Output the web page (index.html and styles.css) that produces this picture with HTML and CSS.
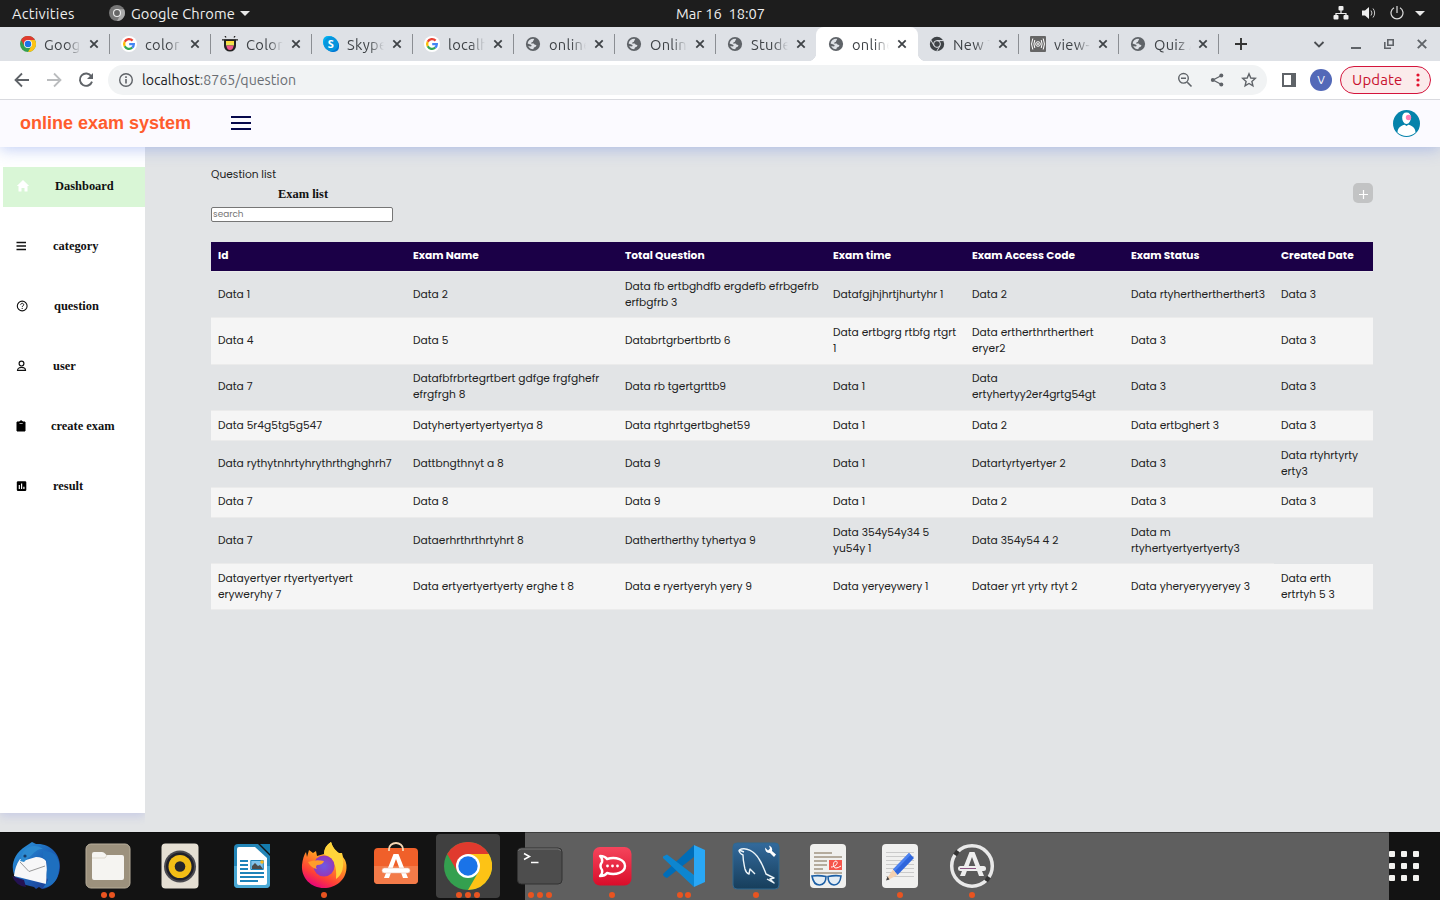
FILE: index.html
```html
<!DOCTYPE html>
<html lang="en">
<head>
<meta charset="utf-8">
<title>online exam system</title>
<link rel="stylesheet" href="styles.css">
</head>
<body>
<svg class="defs" width="0" height="0">
  <symbol id="globe" viewBox="0 0 16 16"><circle cx="8" cy="8" r="7.1" fill="#5f6368"/><path d="M2.600 7.500C3 4.500 5.500 2.600 8.600 2.700L9.200 4 8.200 4.600 8 5.800 6.400 6.600 6 7.600 8.600 7.600 9.800 8.800 11.400 9 11 10.600 9 11.400 8.200 13.300C6 13.300 4 12 3.200 10L5.400 10.400 6.800 10 6 8.800z" fill="#dee1e6"/></symbol>
  <symbol id="google" viewBox="0 0 16 16"><circle cx="8" cy="8" r="8" fill="#fff"/><g fill="none" stroke-width="2.3"><path d="M11.6 4.6A4.9 4.9 0 0 0 3.7 5.8" stroke="#ea4335"/><path d="M3.7 5.8A4.9 4.9 0 0 0 3.7 10.3" stroke="#fbbc05"/><path d="M3.7 10.3A4.9 4.9 0 0 0 11.2 11.7" stroke="#34a853"/><path d="M11.2 11.7A4.9 4.9 0 0 0 12.8 8.2H8.2" stroke="#4285f4"/></g></symbol>
  <symbol id="chrome" viewBox="0 0 48 48"><circle cx="24" cy="24" r="24" fill="#34a04f"/><path d="M24 24 3.2 12A24 24 0 0 1 44.8 12z" fill="#e03a2e"/><path d="M24 12H44.8A24 24 0 0 1 24 48L34.4 30z" fill="#fdc315"/><path d="M3.2 12 13.6 30 24 24V12z" fill="#e03a2e"/><circle cx="24" cy="24" r="12" fill="#fff"/><circle cx="24" cy="24" r="9.7" fill="#1a73e8"/></symbol>
  <symbol id="chromegray" viewBox="0 0 16 16"><circle cx="8" cy="8" r="7.2" fill="#3f4347"/><g stroke="#dee1e6" stroke-width="1" fill="none"><circle cx="8" cy="8" r="3.4"/><path d="M8 4.6h6.5M5 9.7 1.8 4M11 9.7 7.7 15.3"/></g></symbol>
  <symbol id="close" viewBox="0 0 10 10"><path d="M1.3 1.3 8.7 8.7M8.7 1.3 1.3 8.7" stroke="#3f4347" stroke-width="1.8"/></symbol>
</svg>

<div class="topbar">
  <span class="activities">Activities</span>
  <span class="app"><svg width="16" height="16" viewBox="0 0 16 16"><circle cx="8" cy="8" r="8" fill="#777"/><path d="M8 4.2H15A8 8 0 0 1 8 16L11.3 10z" fill="#aaa"/><circle cx="8" cy="8" r="4" fill="#eee"/><circle cx="8" cy="8" r="2.9" fill="#666"/></svg><b>Google Chrome</b><i class="caret"></i></span>
  <span class="clock">Mar 16&nbsp; 18:07</span>
  <span class="status">
    <svg width="16" height="14" viewBox="0 0 16 14"><path d="M8 3v5M3 10V7.5h10V10" stroke="#eee" stroke-width="1.2" fill="none"/><g fill="#eee"><rect x="5.5" y="0" width="5" height="4.5" rx="1"/><rect x=".5" y="9" width="5" height="4.5" rx="1"/><rect x="10.5" y="9" width="5" height="4.5" rx="1"/></g></svg>
    <svg width="16" height="14" viewBox="0 0 16 14"><path d="M1 4.5h3L8 1v12L4 9.500H1z" fill="#eee"/><path d="M10 4.500a4 4 0 0 1 0 5M12 2.500a7 7 0 0 1 0 9" fill="none" stroke="#ccc"/></svg>
    <svg width="14" height="14" viewBox="0 0 14 14"><path d="M4 1.700a6 6 0 1 0 6 0M7 0v7" fill="none" stroke="#ddd" stroke-width="1.200"/></svg>
    <i class="caret"></i>
  </span>
</div>

<div class="tabs">
  <div class="tab"><svg class="fav"><use href="#chrome"/></svg><span>Goog</span><svg class="x"><use href="#close"/></svg></div>
  <div class="tab"><svg class="fav"><use href="#google"/></svg><span>color</span><svg class="x"><use href="#close"/></svg></div>
  <div class="tab"><svg class="fav" viewBox="0 0 16 16"><path d="M2 3.500h12V10a6 5.500 0 0 1-12 0z" fill="#222"/><path d="M4 5h8v2H4z" fill="#ffd83b"/><path d="M4 7h8v2.500H4z" fill="#e8e455"/><path d="M4.300 9.500h7.400Q11 14 8 14T4.300 9.500" fill="#f0568c"/><path d="M0 3.800h16M3 0l1 1.500M13 0l-1 1.500" stroke="#222" stroke-width="1.300"/></svg><span>Color</span><svg class="x"><use href="#close"/></svg></div>
  <div class="tab"><svg class="fav" viewBox="0 0 16 16"><rect x="0" y="0" width="12" height="12" rx="5" fill="#00aff0"/><rect x="4" y="4" width="12" height="12" rx="5" fill="#0078d4"/><circle cx="8" cy="8" r="7.200" fill="#0795dd"/><text x="8" y="12" class="skype">S</text></svg><span>Skype</span><svg class="x"><use href="#close"/></svg></div>
  <div class="tab"><svg class="fav"><use href="#google"/></svg><span>localh</span><svg class="x"><use href="#close"/></svg></div>
  <div class="tab"><svg class="fav"><use href="#globe"/></svg><span>online</span><svg class="x"><use href="#close"/></svg></div>
  <div class="tab"><svg class="fav"><use href="#globe"/></svg><span>Onlin</span><svg class="x"><use href="#close"/></svg></div>
  <div class="tab last"><svg class="fav"><use href="#globe"/></svg><span>Stude</span><svg class="x"><use href="#close"/></svg></div>
  <div class="tab active"><svg class="fav"><use href="#globe"/></svg><span>online</span><svg class="x"><use href="#close"/></svg></div>
  <div class="tab"><svg class="fav"><use href="#chromegray"/></svg><span>New T</span><svg class="x"><use href="#close"/></svg></div>
  <div class="tab narrow"><svg class="fav" viewBox="0 0 16 16"><rect width="16" height="16" rx="1" fill="#666"/><g fill="none" stroke="#fff" stroke-width="1"><path d="M2.800 2.500q-2.500 5.500 0 11M4.800 4q-1.800 4 0 8M13.200 2.500q2.500 5.500 0 11M11.200 4q1.800 4 0 8"/><circle cx="8" cy="8" r="2.300"/></g><circle cx="8" cy="8" r=".9" fill="#fff"/></svg><span>view-</span><svg class="x"><use href="#close"/></svg></div>
  <div class="tab narrow"><svg class="fav"><use href="#globe"/></svg><span>Quiz A</span><svg class="x"><use href="#close"/></svg></div>
  <svg class="newtab" viewBox="0 0 12 12"><path d="M6 0v12M0 6h12" stroke="#333" stroke-width="1.900"/></svg>
  <div class="winbtns">
    <svg width="12" height="10" viewBox="0 0 12 10"><path d="M1.500 3 6 7.500 10.500 3" fill="none" stroke="#4a4d51" stroke-width="1.800"/></svg>
    <svg width="10" height="10" viewBox="0 0 10 10"><path d="M0 9h10" stroke="#5f6368" stroke-width="2"/></svg>
    <svg width="10" height="10" viewBox="0 0 10 10"><path d="M3.800.8h5.400v5.400H3.800zM.8 3v6.200H7" fill="none" stroke="#5f6368" stroke-width="1.600"/></svg>
    <svg width="10" height="10" viewBox="0 0 10 10"><path d="M.8.8 9.200 9.200M9.200.8.8 9.200" stroke="#5f6368" stroke-width="1.900"/></svg>
  </div>
</div>

<div class="toolbar">
  <svg class="nav" viewBox="0 0 16 16"><path d="M15 8H2M8 1.500 1.500 8 8 14.500" fill="none" stroke="#5f6368" stroke-width="1.800"/></svg>
  <svg class="nav" viewBox="0 0 16 16"><path d="M1 8h13M8 1.500 14.500 8 8 14.500" fill="none" stroke="#babcbe" stroke-width="1.800"/></svg>
  <svg class="nav" viewBox="0 0 16 16"><path d="M13.300 4.300A6.200 6.200 0 1 0 14 9.600" fill="none" stroke="#5f6368" stroke-width="1.900"/><path d="M15 1v6H9z" fill="#5f6368"/></svg>
  <div class="omnibox">
    <svg width="16" height="16" viewBox="0 0 16 16"><circle cx="8" cy="8" r="6.300" fill="none" stroke="#5f6368" stroke-width="1.400"/><path d="M8 7v4.500M8 4.300v1.600" stroke="#5f6368" stroke-width="1.600"/></svg>
    <span class="url">localhost<em>:8765/question</em></span>
    <div class="omni-icons">
      <svg width="16" height="16" viewBox="0 0 16 16"><path d="M10.300 10.300 14.500 14.500M4 6.300h5" stroke="#5f6368" stroke-width="1.600"/><circle cx="6.500" cy="6.300" r="4.800" fill="none" stroke="#5f6368" stroke-width="1.400"/></svg>
      <svg width="16" height="16" viewBox="0 0 16 16"><path d="M12.500 3.500 4 8l8.500 4.500" fill="none" stroke="#5f6368" stroke-width="1.300"/><g fill="#5f6368"><circle cx="12.300" cy="3.500" r="2"/><circle cx="3.800" cy="8" r="2"/><circle cx="12.300" cy="12.500" r="2"/></g></svg>
      <svg width="16" height="16" viewBox="0 0 16 16"><path d="M8 1.800 9.800 6l4.500.4-3.400 3 1 4.400L8 11.500l-3.900 2.300 1-4.400-3.400-3L6.200 6z" fill="none" stroke="#5f6368" stroke-width="1.400"/></svg>
    </div>
  </div>
  <svg class="panel" width="14" height="14" viewBox="0 0 14 14"><path d="M1 1h12v12H1z" fill="#fff" stroke="#5f6368" stroke-width="2"/><path d="M9 1h4v12H9z" fill="#5f6368"/></svg>
  <span class="profile">V</span>
  <span class="update"><b>Update</b><svg width="4" height="14" viewBox="0 0 4 14"><g fill="#e2102c"><circle cx="2" cy="2" r="1.600"/><circle cx="2" cy="7" r="1.600"/><circle cx="2" cy="12" r="1.600"/></g></svg></span>
</div>

<header class="header">
  <h1>online exam system</h1>
  <div class="burger"><i></i><i></i><i></i></div>
  <svg class="avatar" viewBox="0 0 27 27"><circle cx="13.500" cy="13.500" r="13.500" fill="#0583ab"/><path d="M4.500 22.500c0-5 4-7 7.200-7.800L13.500 16l1.800-1.300c3.200.8 7.200 2.800 7.200 7.800-5 4.500-13 4.500-18 0z" fill="#fff"/><path d="M13.500 2.500c3 0 4.300 2 4.300 5 0 3.500-1.800 6.500-4.300 6.500S9.200 11 9.200 7.500c0-3 1.300-5 4.300-5z" fill="#fff"/><circle cx="15.500" cy="7.500" r="2.700" fill="#ff80b5"/></svg>
</header>

<div class="page">
  <nav class="side">
    <a class="on"><svg viewBox="0 0 14 14"><path d="M7 1 .800 7H2.500v5.500h3V9h3v3.500h3V7h1.700z" fill="#fff"/></svg><span class="s4">Dashboard</span></a>
    <a><svg viewBox="0 0 14 14"><path d="M.500 3.500h9.500M.500 7h9.500M.500 10.500h9.500" stroke="#111" stroke-width="1.400"/></svg><span class="s2">category</span></a>
    <a><svg viewBox="0 0 14 14"><circle cx="6.200" cy="7" r="4.900" fill="none" stroke="#111" stroke-width="1.100"/><path d="M4.700 5.800c0-2 3-2 3 0 0 1.100-1.500 1-1.500 2.200M6.200 8.900v1.100" fill="none" stroke="#111"/></svg><span class="s3">question</span></a>
    <a><svg viewBox="0 0 14 14"><circle cx="5.500" cy="4.600" r="2.400" fill="none" stroke="#111" stroke-width="1.200"/><path d="M1.500 11.400c0-4 8-4 8 0z" fill="none" stroke="#111" stroke-width="1.200"/></svg><span class="s2">user</span></a>
    <a><svg viewBox="0 0 14 14"><path d="M1 3h2.500a1.700 1.700 0 0 1 3.200 0H9v9H1z" fill="#000" stroke="#000" stroke-linejoin="round"/><path d="M3.500 4.500h3.200" stroke="#aaa"/></svg><span class="s1">create exam</span></a>
    <a><svg viewBox="0 0 14 14"><rect x=".800" y="2.300" width="9.500" height="9.700" rx="1.200"/><path d="M3.300 6v4M5.600 4.500V10M7.900 7.800V10" stroke="#fff" stroke-width="1.200"/></svg><span class="s2">result</span></a>
  </nav>
  <main class="main">
    <div class="head">
      <div class="filter">
        <p>Question list</p>
        <h2>Exam list</h2>
        <input class="search" placeholder="search">
      </div>
      <button class="add"><svg width="9" height="9" viewBox="0 0 9 9"><path d="M4.500 0v9M0 4.500h9" stroke="#fff" stroke-width="1.200"/></svg></button>
    </div>
    <table class="grid">
      <colgroup><col class="c1"><col class="c2"><col class="c3"><col class="c4"><col class="c5"><col class="c6"><col class="c7"></colgroup>
      <thead><tr><th>Id</th><th>Exam Name</th><th>Total Question</th><th>Exam time</th><th>Exam Access Code</th><th>Exam Status</th><th>Created Date</th></tr></thead>
      <tbody>
        <tr class="first"><td>Data 1</td><td>Data 2</td><td>Data fb ertbghdfb ergdefb efrbgefrb<br>erfbgfrb 3</td><td>Datafgjhjhrtjhurtyhr 1</td><td>Data 2</td><td>Data rtyherthertherthert3</td><td>Data 3</td></tr>
        <tr class="h47"><td>Data 4</td><td>Data 5</td><td>Databrtgrbertbrtb 6</td><td>Data ertbgrg rtbfg rtgrt<br>1</td><td>Data ertherthrtherthert<br>eryer2</td><td>Data 3</td><td>Data 3</td></tr>
        <tr class="h46 raised"><td>Data 7</td><td>Datafbfrbrtegrtbert gdfge frgfghefr<br>efrgfrgh 8</td><td>Data rb tgertgrttb9</td><td>Data 1</td><td>Data<br>ertyhertyy2er4grtg54gt</td><td>Data 3</td><td>Data 3</td></tr>
        <tr class="h30"><td>Data 5r4g5tg5g547</td><td>Datyhertyertyertyertya 8</td><td>Data rtghrtgertbghet59</td><td>Data 1</td><td>Data 2</td><td>Data ertbghert 3</td><td>Data 3</td></tr>
        <tr class="h47"><td>Data rythytnhrtyhrythrthghghrh7</td><td>Dattbngthnyt a 8</td><td>Data 9</td><td>Data 1</td><td>Datartyrtyertyer 2</td><td>Data 3</td><td>Data rtyhrtyrty<br>erty3</td></tr>
        <tr class="h30 raised"><td>Data 7</td><td>Data 8</td><td>Data 9</td><td>Data 1</td><td>Data 2</td><td>Data 3</td><td>Data 3</td></tr>
        <tr class="h46"><td>Data 7</td><td>Dataerhrthrthrtyhrt 8</td><td>Dathertherthy tyhertya 9</td><td>Data 354y54y34 5<br>yu54y 1</td><td>Data 354y54 4 2</td><td>Data m<br>rtyhertyertyertyerty3</td></tr>
        <tr class="h46"><td>Datayertyer rtyertyertyert<br>eryweryhy 7</td><td>Data ertyertyertyerty erghe t 8</td><td>Data e ryertyeryh yery 9</td><td>Data yeryeywery 1</td><td>Dataer yrt yrty rtyt 2</td><td>Data yheryeryyeryey 3</td><td>Data erth<br>ertrtyh 5 3</td></tr>
      </tbody>
    </table>
  </main>
</div>

<footer class="dock">
  <div class="app-icon"><svg viewBox="0 0 48 48"><defs><linearGradient id="tb" x1="0" y1="0" x2="1" y2="1"><stop offset="0" stop-color="#2f9be0"/><stop offset=".5" stop-color="#1c63b8"/><stop offset="1" stop-color="#1f2f86"/></linearGradient></defs><path d="M14 4 20 0 24 2C38 1 48 12 48 24 48 36 40 46 30 47L27 45 24 47 22 45 10 42 6 40C-2 30-2 14 14 4z" fill="url(#tb)"/><path d="M8 17 14 18 24 15Q31 15 34 19L35 28 34 42 2 34Q3 24 8 17z" fill="#f7f7f8"/><path d="M8 20 17 29.500 33 24" fill="none" stroke="#999"/><path d="M9 17C9 6 22 0 31 7 24 6 21 13 16 16L12 20 8 19z" fill="#2d8ad0"/><path d="M31 16C39 18 32 32 36 38L31 46C44 44 48 34 47 20Q44 8 31 9z" fill="#1e6fbf"/><path d="M0 34 12 38 14 45Q4 44 0 34z" fill="#241252"/><circle cx="13" cy="14" r="1.600" fill="#173b68"/></svg></div>
  <div class="app-icon"><svg viewBox="0 0 48 48"><rect x="2" y="2" width="44" height="44" rx="5" fill="#9c917d" stroke="#b8ae9b"/><path d="M8 12q0-2 2-2h8q2 0 3 1.500L22.500 13H38q2 0 2 2v21q0 2-2 2H10q-2 0-2-2z" fill="#f5f4f1"/><path d="M8 16h13l2-3" stroke="#ddd8cd" fill="none"/></svg><span class="dots"><i></i><i></i></span></div>
  <div class="app-icon"><svg viewBox="0 0 48 48"><rect x="5.500" y="1.500" width="37" height="45" rx="4" fill="#e5dfd3"/><circle cx="24" cy="24.500" r="16" fill="#4a4a4f"/><circle cx="24" cy="24.500" r="14" fill="#20212b"/><circle cx="24" cy="24.500" r="11.500" fill="#f2bd16"/><circle cx="24" cy="24.500" r="5.300" fill="#25252c"/></svg></div>
  <div class="app-icon"><svg viewBox="0 0 48 48"><path d="M10 2h20l12 12v28q0 4-4 4H10q-4 0-4-4V6q0-4 4-4z" fill="#2385b7"/><path d="M6 24h36v18q0 4-4 4H10q-4 0-4-4z" fill="#49a8d4"/><path d="M9 7q0-2 2-2h16l12 11v25q0 2-2 2H11q-2 0-2-2z" fill="#fff"/><path d="M32 2h10v10z" fill="#147bad"/><path d="M12 19h8M12 23h8M12 27h8M12 31h24M12 35h24M12 39h18" stroke="#1d83ba" stroke-width="2"/><path d="M22.800 18.500h12.500v9H22.800z" fill="#82c4ec" stroke="#1d83ba"/><path d="M24 27v-3l3-3 3 3 2-1 3 4z" fill="#4b4b4b"/><circle cx="34" cy="20" r="1.800" fill="#f8b81d"/></svg></div>
  <div class="app-icon"><svg viewBox="0 0 48 48"><defs><linearGradient id="fx" x1=".8" y1="0" x2=".3" y2="1"><stop offset="0" stop-color="#fff04d"/><stop offset=".4" stop-color="#ff9a22"/><stop offset=".75" stop-color="#ff4036"/><stop offset="1" stop-color="#e5007f"/></linearGradient><radialGradient id="fxc"><stop offset="0" stop-color="#6d59e5"/><stop offset="1" stop-color="#9438b8"/></radialGradient></defs><path d="M7 15 9 8 13 11 16 9 17 14 24 12Q24 4 31 0 33 7 38 11L42 11 43 15Q47 20 46.500 26C46 38 36 46 24 46 11 46 1 36 2 23Q3 14 6 10z" fill="url(#fx)"/><path d="M24 12Q24 5 31 0 33 8 42 13 46 30 36 37 38 18 24 12z" fill="#ffd43b"/><circle cx="24" cy="24" r="10.500" fill="url(#fxc)"/><path d="M8 20q8-3 16-1-1 4-7 4-2 2 0 4-6-1-9-7z" fill="#ff9e2b"/></svg><span class="dots"><i></i></span></div>
  <div class="app-icon"><svg viewBox="0 0 48 48"><rect x="2" y="6" width="44" height="36" rx="4" fill="#f0602a"/><path d="M2 24h44v14q0 4-4 4H6q-4 0-4-4z" fill="#f37b49"/><path d="M17 9V7a7 6 0 0 1 14 0v2" fill="none" stroke="#f6d6b4" stroke-width="1.800"/><path d="M21.500 12h5L36 36h-5L24 17 17 36h-5z" fill="#fff"/><rect x="10" y="26" width="28" height="5" rx="2.500" fill="#fff" stroke="#e8bba8" stroke-width=".6"/></svg></div>
  <div class="app-icon current"><svg><use href="#chrome"/></svg><span class="dots"><i></i><i></i><i></i></span></div>
  <div class="app-icon"><svg viewBox="0 0 48 48"><rect x="1.500" y="6" width="44.500" height="36" rx="4" fill="#4d4d4d" stroke="#333"/><path d="M2.500 9q0-2 3-2h36q3 0 3 2" fill="none" stroke="#777"/><path d="M8 11.500 13.500 14.500 8 17.500M15 20.500h7.500" fill="none" stroke="#fff" stroke-width="1.500"/></svg><span class="dots"><i></i><i></i><i></i></span></div>
  <div class="app-icon"><svg viewBox="0 0 48 48"><defs><linearGradient id="rc" x1="0" y1="0" x2="0" y2="1"><stop offset="0" stop-color="#f5455c"/><stop offset="1" stop-color="#da0d2a"/></linearGradient></defs><rect x="5" y="5" width="38.500" height="38.500" rx="7" fill="url(#rc)"/><path d="M12 14q5 0 7 3c9-3 18 1 18 7s-9 10-18 7q-2 3-7 3 3-3 2-6-3-4 0-8 1-3-2-6z" fill="none" stroke="#fff" stroke-width="2.400" stroke-linejoin="round"/><g fill="#fff"><circle cx="19.500" cy="24" r="1.400"/><circle cx="24.500" cy="24" r="1.400"/><circle cx="29.500" cy="24" r="1.400"/></g></svg><span class="dots"><i></i></span></div>
  <div class="app-icon"><svg viewBox="0 0 48 48"><path d="M34 3 34 15 7 36Q5 36 3 33 3 32 4 31z" fill="#006db8"/><path d="M3 14.500 7 12.500 34 33V45L4 17Q2.500 16 3 14.500z" fill="#0d86d0"/><path d="M34 3 45 8V40L34 45z" fill="#29a7f5"/></svg><span class="dots"><i></i><i></i></span></div>
  <div class="app-icon"><svg viewBox="0 0 48 48"><defs><linearGradient id="my" x1="0" y1="0" x2="0" y2="1"><stop offset="0" stop-color="#336a9c"/><stop offset="1" stop-color="#173e5b"/></linearGradient></defs><rect x="1" y="1" width="46" height="46" rx="4" fill="url(#my)" stroke="#2f6890"/><path d="M7 8c7-4 16 2 20 9 4 6 5 10 7 15l8 4-4 1 4 4-7-4M7 8q0 3 4 5c0 6 1 9 2 14q1 4 4 5l1-5 5 5M7 8l5 2" fill="none" stroke="#edf5f9" stroke-width="1.400" stroke-linejoin="round"/><path d="M33 5.500 36 8.500 38 6.500 37 3.500Q41 5 40 9L44 12.500 42 15 38 11Q33 11 33 5.500z" fill="#fff"/></svg><span class="dots"><i></i></span></div>
  <div class="app-icon"><svg viewBox="0 0 48 48"><rect x="6" y="2" width="36" height="44" rx="4" fill="#f0f0ee"/><path d="M10 11h18M10 15h28M10 19h13M10 23h13M10 27h9M10 31h28" stroke="#b4ab9d" stroke-width="1.800"/><rect x="25" y="18" width="13" height="10" fill="#f6554b"/><path d="M27 25c5 0 8-5 5-6-3 0-4 7 0 7q2 0 5-2" fill="none" stroke="#fff"/><g fill="#e3edf5" stroke="#1c5fa5" stroke-width="1.600"><path d="M8 34q7-1 14 0.500 0 8-6.500 8.500-6 0-7.500-9zM24 34.500q7-1.500 13-.500-1 9-7 9-6-.500-6-8.500z"/></g></svg></div>
  <div class="app-icon"><svg viewBox="0 0 48 48"><rect x="6" y="2" width="36" height="44" rx="4" fill="#f0f0ef"/><path d="M10 10.500h28M10 14.500h28M10 18.500h28M10 22.500h28M10 26.500h28M10 30.500h28M10 34.500h28" stroke="#cacaca"/><path d="M17 27.500 33 11 38 16 21.500 33z" fill="#2f66dc"/><path d="M17 27.500 33 11l1.800 1.800L18.600 29.500z" fill="#4c82f1"/><path d="M17 27.500 21.500 33 12 38 10.500 37z" fill="#f3d0b0"/><path d="M11.500 34.500 13.500 37.500 10 38.500z" fill="#444"/></svg><span class="dots"><i></i></span></div>
  <div class="app-icon"><svg viewBox="0 0 48 48"><circle cx="24" cy="24" r="20.300" fill="#5a5a5a" stroke="#e9e9e9" stroke-width="3.500"/><path d="M7 13 10 9M38 39 41 35" stroke="#333" stroke-width="4.500"/><path d="M21.500 10h5L36 34h-5L24 15 17 34h-5z" fill="#eee"/><rect x="10" y="24" width="28" height="5" rx="2.500" fill="#eee"/><path d="M12 26.500h16" stroke="#8d5684"/></svg><span class="dots"><i></i></span></div>
  <svg class="apps" viewBox="0 0 30 30"><g fill="#f2f1ee"><rect width="6" height="6" rx="1"/><rect x="12" width="6" height="6" rx="1"/><rect x="24" width="6" height="6" rx="1"/><rect y="12" width="6" height="6" rx="1"/><rect x="12" y="12" width="6" height="6" rx="1"/><rect x="24" y="12" width="6" height="6" rx="1"/><rect y="24" width="6" height="6" rx="1"/><rect x="12" y="24" width="6" height="6" rx="1"/><rect x="24" y="24" width="6" height="6" rx="1"/></g></svg>
</footer>
</body>
</html>
```
FILE: styles.css
```css
* { box-sizing: border-box; }
body { margin: 0; width: 1440px; height: 900px; overflow: hidden; display: flex; flex-direction: column; background: #e2e4e6; font-family: Ubuntu, "Noto Sans", sans-serif; }
svg { display: block; flex: none; }
.defs { position: absolute; }

.topbar { height: 27px; flex: none; display: grid; grid-template-columns: 109px 567px 90px 1fr; align-items: center; background: #1d1d1d; color: #eee; font-size: 14.667px; }
.topbar > * { margin-top: -1px; }
.activities { padding-left: 12px; letter-spacing: 0.25px; }
.app { display: flex; align-items: center; gap: 6px; }
.app b { font-weight: 400; letter-spacing: 0.08px; }
.caret { width: 0; height: 0; border: 5px solid transparent; border-top-color: #e8e8e8; border-bottom: 0; }
.app .caret { margin-left: -1px; }
.clock { white-space: nowrap; }
.status { display: flex; justify-content: flex-end; align-items: center; gap: 12.500px; padding-right: 15px; }
.status .caret { margin-left: -1px; }

.tabs { height: 34px; flex: none; display: flex; align-items: center; padding-left: 9px; background: #dee1e6; }
.tab { position: relative; width: 101px; height: 34px; flex: none; display: flex; align-items: center; padding-left: 11px; color: #3f4347; font-size: 14.667px; letter-spacing: 0.3px; }
.tab.narrow { width: 100px; }
.tab::after { content: ""; position: absolute; right: 0; top: 7px; width: 1px; height: 20px; background: #8b8e93; }
.tab.last::after, .tab.active::after { display: none; }
.tab.active { width: 102px; margin-left: -1px; padding-left: 12px; background: #fff; border-radius: 8px 8px 0 0; }
.tab.active::before { content: ""; position: absolute; left: -8px; right: -8px; bottom: 0; height: 8px; background: radial-gradient(circle at 0 0, transparent 8px, #fff 8.500px) left / 8px 8px no-repeat, radial-gradient(circle at 100% 0, transparent 8px, #fff 8.500px) right / 8px 8px no-repeat; }
.tab span { margin-left: 8px; width: 37px; white-space: nowrap; -webkit-mask-image: linear-gradient(90deg, #000 60%, transparent); mask-image: linear-gradient(90deg, #000 60%, transparent); }
.fav { width: 16px; height: 16px; }
.x { width: 10px; height: 10px; margin-left: 8px; }
.narrow .x { margin-left: 7px; }
.skype { font: bold 11px "Open Sans", sans-serif; fill: #fff; text-anchor: middle; }
.newtab { width: 12px; height: 12px; margin-left: 16px; }
.winbtns { margin-left: auto; padding-right: 13px; display: flex; align-items: center; gap: 23px; }
.winbtns svg:first-child { margin-right: 3px; }

.toolbar { position: relative; z-index: 2; height: 39px; flex: none; display: flex; align-items: center; padding-left: 14px; background: #fff; border-bottom: 1px solid #d9dadf; }
.nav { width: 16px; height: 16px; margin-right: 16px; }
.omnibox { width: 1159px; height: 30px; margin-left: -2px; display: flex; align-items: center; padding: 0 10px; border-radius: 15px; background: #f1f3f4; }
.url { margin-left: 8px; font-size: 14.200px; color: #202124; }
.url em { font-style: normal; color: #6a6e73; }
.omni-icons { margin-left: auto; display: flex; gap: 16px; }
.panel { margin-left: 15px; }
.profile { width: 22px; height: 22px; margin-left: 14px; border-radius: 50%; background: #5369b8; color: #fff; font-size: 12px; line-height: 22px; text-align: center; }
.update { width: 91px; height: 28px; margin-left: 8px; display: flex; align-items: center; justify-content: space-between; padding: 0 10px 0 11px; border: 1px solid #d4143c; border-radius: 14px; background: #fbebeb; color: #c8102e; font-size: 15px; }
.update b { margin-top: -2px; font-weight: 400; letter-spacing: 0.15px; }

.header { position: relative; z-index: 1; height: 47px; flex: none; display: flex; align-items: center; padding: 0 20px 1px; background: #fbfaff; box-shadow: 0 2px 15px rgba(65, 105, 225, 0.34); }
.header h1 { margin: 1px 0 0; width: 211px; font: bold 18px "Liberation Sans", sans-serif; color: #ff5c2d; }
.burger { display: grid; gap: 4px; }
.burger i { width: 20px; height: 2px; background: #06084c; }
.avatar { width: 27px; height: 27px; margin-left: auto; }

.page { height: 685px; flex: none; display: flex; align-items: flex-start; }
.side { width: 145px; height: 666px; flex: none; padding: 20px 0 0 3px; display: flex; flex-direction: column; gap: 20px; background: #fff; box-shadow: 0 3px 9px rgba(65, 75, 225, 0.16); clip-path: inset(0 0 -19px 0); }
.side a { height: 40px; display: flex; align-items: center; padding: 0 0 2px 13px; color: #111; font: bold 12.450px "Liberation Serif", serif; }
.side a.on { background: #d9f6d6; }
.side svg { width: 14px; height: 14px; }
.s1 { padding-left: 21px; }
.s2 { padding-left: 23px; }
.s3 { padding-left: 24px; }
.s4 { padding-left: 25px; }

.main { flex: 1; padding: 20px 67px 0 66px; font-family: Poppins, Inter, sans-serif; font-size: 10.667px; color: #212121; }
.head { display: flex; justify-content: space-between; }
.filter { width: 184px; height: 75px; }
.filter p { margin: 0; line-height: 16px; }
.filter h2 { margin: 4px 0 0; font: bold 12.450px/15px "Liberation Serif", serif; text-align: center; color: #111; }
.search { display: block; width: 182px; height: 15px; margin-top: 5px; padding: 0 0 1px 1px; border: 1px solid #767676; border-radius: 2px; font: 8.890px Poppins, Inter, sans-serif; }
.add { width: 20px; height: 20px; margin-top: 16px; padding: 3px 0 0 1px; display: grid; place-items: center; border: 0; border-radius: 5px; background: #c2c3c4; }

.grid { width: 1162px; table-layout: fixed; border-collapse: collapse; line-height: 16px; }
.c1 { width: 195px; }
.c2 { width: 212px; }
.c3 { width: 208px; }
.c4 { width: 139px; }
.c5 { width: 159px; }
.c6 { width: 150px; }
.c7 { width: 99px; }
.grid th { height: 29px; padding: 0 7px 1px; background: #1b0047; color: #fff; text-align: left; font-weight: 700; }
.grid td { padding: 0 0 0 7px; white-space: nowrap; box-shadow: inset 0 -1px #ebebeb; }
.grid tbody tr:nth-child(even) { background: #f5f5f5; }
.first { height: 47px; }
.h46 { height: 46px; }
.h47 { height: 47px; }
.h30 { height: 30px; }
.grid .first td { padding-top: 1px; box-shadow: inset 0 1px #ebebeb, inset 0 -1px #ebebeb; }
.grid .h47 td { padding-bottom: 1px; }
.grid .raised td { padding-bottom: 2px; }

.dock { height: 68px; flex: none; display: flex; align-items: center; background: linear-gradient(90deg, #131313 525px, #5f5f5f 525px, #5f5f5f 1389px, #131313 1389px); box-shadow: inset 0 1px rgba(0, 0, 0, 0.35); }
.app-icon { position: relative; width: 72px; height: 68px; flex: none; display: grid; place-items: center; }
.app-icon > svg { position: relative; width: 48px; height: 48px; }
.app-icon.current::before { content: ""; position: absolute; inset: 2px 4px; border-radius: 4px; background: #404040; }
.dots { position: absolute; bottom: 2px; left: 0; right: 0; display: flex; justify-content: center; gap: 2.700px; }
.dots i { width: 6px; height: 6px; border-radius: 50%; background: #e95420; }
.apps { width: 30px; height: 30px; margin-left: 381px; }
```
